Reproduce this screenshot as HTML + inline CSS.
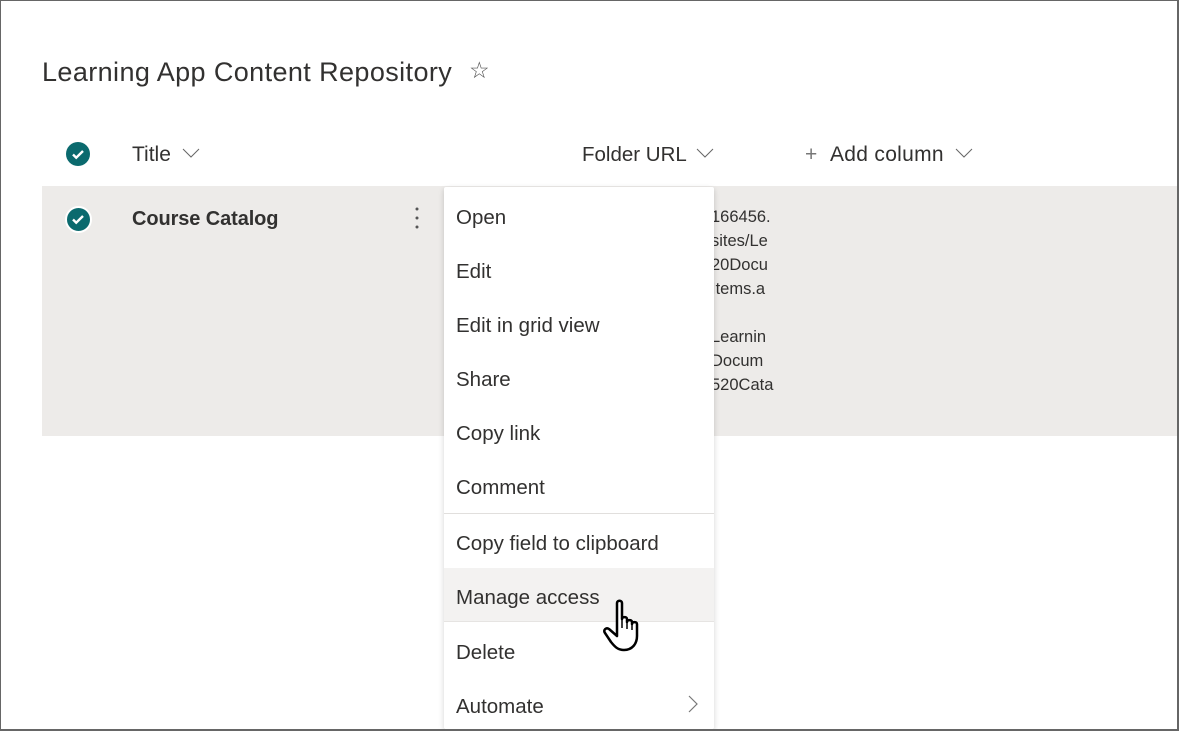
<!DOCTYPE html>
<html><head><style>
*{margin:0;padding:0;box-sizing:border-box}
html,body{width:1179px;height:731px;overflow:hidden;background:#fff}
body{position:relative;font-family:"Liberation Sans",sans-serif;color:#323130}
.frame{position:absolute;left:0;top:0;width:1179px;height:731px;border:1px solid #666;border-right-width:2px;border-bottom-width:2px;z-index:10;pointer-events:none}
.abs{position:absolute;white-space:nowrap}
.row{position:absolute;left:42px;top:186px;width:1137px;height:250px;background:#edebe9}
.chk{position:absolute;width:24px;height:24px;border-radius:50%;background:#0b6a6e}
.menu{position:absolute;left:444px;top:187px;width:270px;height:542px;background:#fff;box-shadow:0 2px 6px rgba(0,0,0,.18);border-radius:2px}
.mi{position:absolute;left:12px;font-size:20.5px;color:#323130}
.url{font-size:16.5px;color:#323130;left:711px;line-height:24px}
</style></head><body>
<div class="frame"></div>
<div class="abs" style="left:42px;top:57px;font-size:27px;letter-spacing:0.4px;color:#323130">Learning App Content Repository</div>
<div class="abs" style="left:469px;top:57px;font-size:23px;color:#555">☆</div>

<div class="chk" style="left:66px;top:142px"><svg width="24" height="24"><path d="M7 12.5l3.2 3.2L17 9" stroke="#fff" stroke-width="2.4" fill="none"/></svg></div>
<div class="abs" style="left:132px;top:143px;font-size:21px">Title</div>
<svg class="abs" style="left:182px;top:148px" width="18" height="10"><path d="M1 1l8 8 8-8" stroke="#666" stroke-width="1" fill="none"/></svg>
<div class="abs" style="left:582px;top:143px;font-size:20.5px">Folder URL</div>
<svg class="abs" style="left:696px;top:148px" width="18" height="10"><path d="M1 1l8 8 8-8" stroke="#666" stroke-width="1" fill="none"/></svg>
<div class="abs" style="left:805px;top:143px;font-size:21px;color:#777">+</div>
<div class="abs" style="left:830px;top:143px;font-size:21px;letter-spacing:0.3px">Add column</div>
<svg class="abs" style="left:955px;top:148px" width="18" height="10"><path d="M1 1l8 8 8-8" stroke="#666" stroke-width="1" fill="none"/></svg>

<div class="row"></div>
<div class="chk" style="left:65px;top:206px;border:2px solid #fff;width:27px;height:27px"><svg width="23" height="23"><path d="M6 11.5l3.2 3.2L16 8" stroke="#fff" stroke-width="2.4" fill="none"/></svg></div>
<div class="abs" style="left:132px;top:208px;font-size:20px;font-weight:bold;color:#323130;letter-spacing:-0.1px">Course Catalog</div>
<svg class="abs" style="left:414px;top:206px" width="6" height="24"><circle cx="3" cy="3" r="1.5" fill="#555"/><circle cx="3" cy="12" r="1.5" fill="#555"/><circle cx="3" cy="21" r="1.5" fill="#555"/></svg>
<div class="abs url" style="top:205px">166456.</div>
<div class="abs url" style="top:229px">sites/Le</div>
<div class="abs url" style="top:253px">20Docu</div>
<div class="abs url" style="top:277px">Items.a</div>
<div class="abs url" style="top:325px">Learnin</div>
<div class="abs url" style="top:349px">Docum</div>
<div class="abs url" style="top:373px">520Cata</div>

<div class="menu">
<div class="mi" style="top:19px">Open</div>
<div class="mi" style="top:73px">Edit</div>
<div class="mi" style="top:127px">Edit in grid view</div>
<div class="mi" style="top:181px">Share</div>
<div class="mi" style="top:235px">Copy link</div>
<div class="mi" style="top:289px">Comment</div>
<div style="position:absolute;left:0;top:326px;width:270px;height:1px;background:#e1dfdd"></div>
<div class="mi" style="top:345px">Copy field to clipboard</div>
<div style="position:absolute;left:0;top:381px;width:270px;height:54px;background:#f3f2f1;border-bottom:1px solid #e6e4e2"></div>
<div class="mi" style="top:399px">Manage access</div>
<div class="mi" style="top:454px">Delete</div>
<div class="mi" style="top:508px">Automate</div>
<svg style="position:absolute;left:244px;top:508px" width="10" height="18"><path d="M1 1l8 8-8 8" stroke="#777" stroke-width="1.2" fill="none"/></svg>
</div>
<svg class="abs" style="left:600px;top:598px" width="48" height="56" viewBox="0 0 48 56"><path d="M17 5c0-3 5-3 5 0v16c0-2.5 5-2.5 5 0v3c0-2.5 5-2.5 5 0v2c0-2.5 5-2.5 5 0v12c0 8-5 14-13 14-6 0-9-3-13-8L5 35c-2-3 1-6 4-4l8 7z" fill="#fff" stroke="#000" stroke-width="2.5" stroke-linejoin="round"/><path d="M22 22v8M27 24v7M32 26v6" stroke="#000" stroke-width="1.5"/></svg>
</body></html>
